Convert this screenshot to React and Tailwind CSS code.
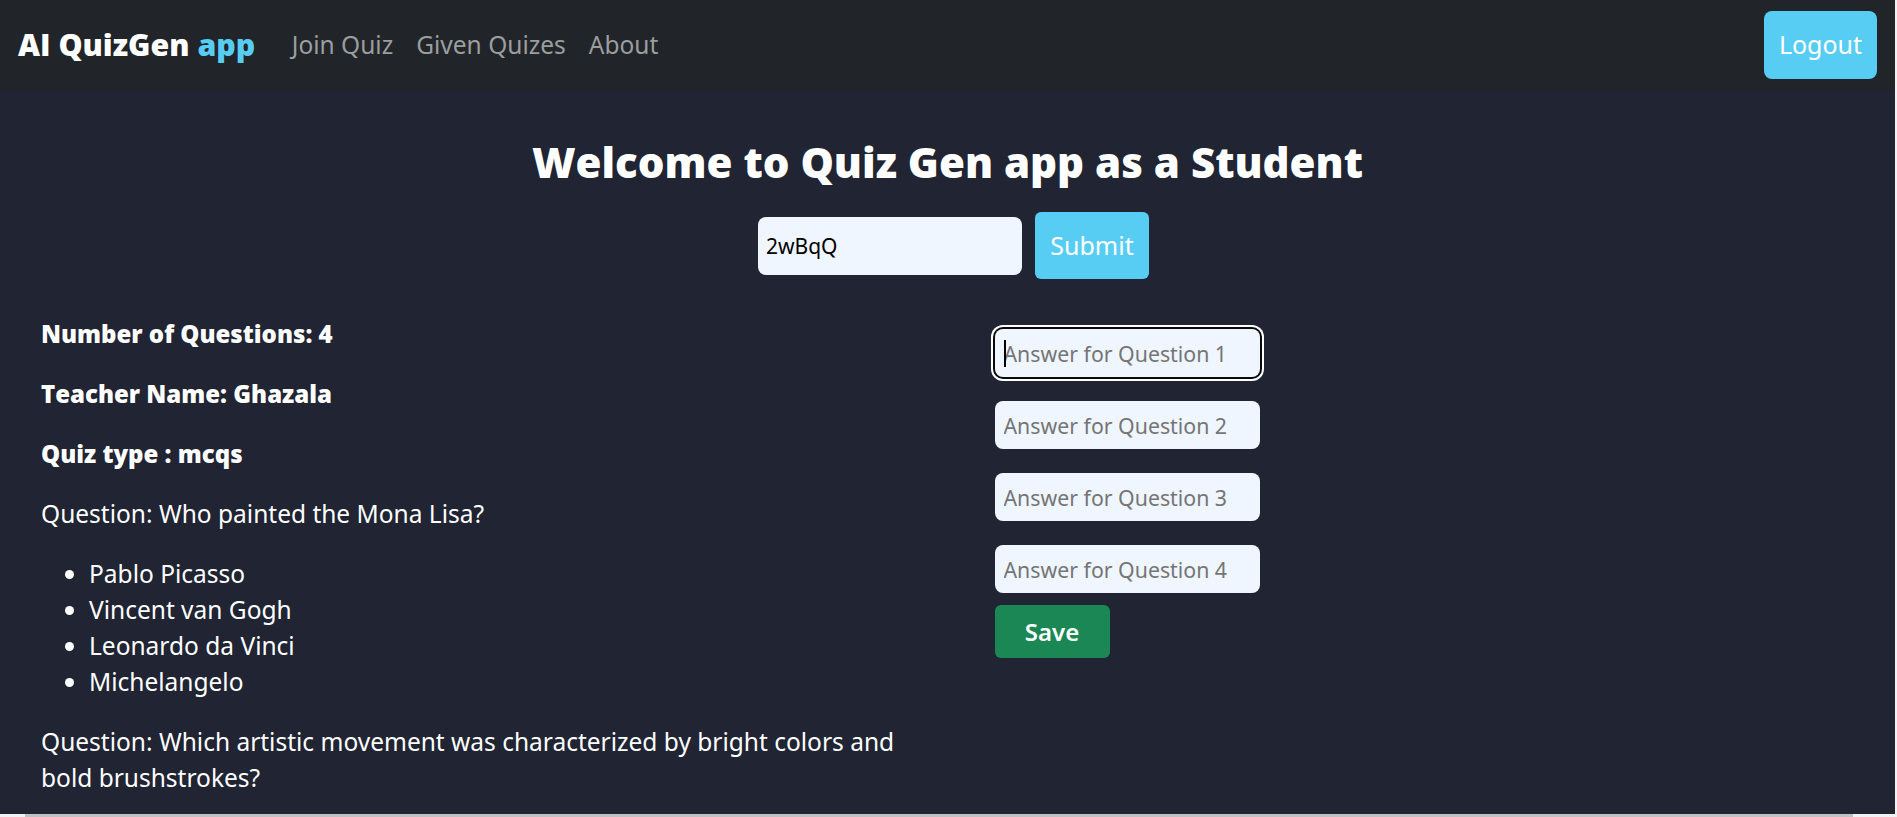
import { useState } from 'react'

const font = { fontFamily: '"Noto Sans", "Open Sans", sans-serif' }
const heavy = { fontFamily: '"Open Sans", "Noto Sans", sans-serif' }

const options = ['Pablo Picasso', 'Vincent van Gogh', 'Leonardo da Vinci', 'Michelangelo']

export default function App() {
  const [code, setCode] = useState('2wBqQ')
  const [answers, setAnswers] = useState(['', '', '', ''])

  return (
    <div className="flex h-screen w-screen flex-col overflow-hidden bg-[#f1f1f1]" style={font}>
      <div className="flex min-h-0 flex-1">
        <div className="flex min-w-0 flex-1 flex-col overflow-hidden bg-[#202433]">
          {/* Navbar */}
          <nav className="flex h-[90px] shrink-0 items-center bg-[#212529] pl-[18px] pr-[18px]">
            <a className="text-[30.3px] font-extrabold leading-none text-white" style={heavy}>
              AI QuizGen <span className="text-[#58cdf3]">app</span>
            </a>
            <ul className="ml-[25px] flex items-center">
              <li className="px-[11.5px] text-[24.5px] text-[#9b9d9f]">Join Quiz</li>
              <li className="px-[11.5px] text-[24.5px] text-[#9b9d9f]">Given Quizes</li>
              <li className="px-[11.5px] text-[24.5px] text-[#9b9d9f]">About</li>
            </ul>
            <button className="ml-auto h-[68px] w-[113px] rounded-[8px] bg-[#58cdf3] text-[25px] text-white">
              Logout
            </button>
          </nav>

          {/* Join */}
          <h1 className="mt-[48px] text-center text-[42px] font-extrabold leading-[48px] text-white" style={heavy}>
            Welcome to Quiz Gen app as a Student
          </h1>
          <form
            className="mt-[26px] flex items-center justify-center gap-[13px] pl-[12px]"
            onSubmit={(e) => e.preventDefault()}
          >
            <input
              value={code}
              onChange={(e) => setCode(e.target.value)}
              className="h-[58px] w-[264px] rounded-[8px] bg-[#eff6ff] pl-[8px] text-[21px] text-black outline-none"
            />
            <button className="h-[67px] w-[114px] rounded-[6px] bg-[#58cdf3] text-[25px] text-white">
              Submit
            </button>
          </form>

          {/* Quiz */}
          <div className="mt-[37px] grid grid-cols-2">
            <div className="pl-[41px] pr-[41px] text-[24.5px] leading-[36px] text-white">
              <p className="mb-[24px] text-[24px] font-extrabold" style={heavy}>Number of Questions: 4</p>
              <p className="mb-[24px] text-[24px] font-extrabold" style={heavy}>Teacher Name: Ghazala</p>
              <p className="mb-[24px] text-[24px] font-extrabold" style={heavy}>Quiz type : mcqs</p>
              <p className="mb-[24px]">Question: Who painted the Mona Lisa?</p>
              <ul className="mb-[24px] list-disc pl-[48px]">
                {options.map((o) => (
                  <li key={o}>{o}</li>
                ))}
              </ul>
              <p className="mb-[24px]">
                Question: Which artistic movement was characterized by bright colors and bold brushstrokes?
              </p>
            </div>
            <div className="flex flex-col items-start gap-[24px] pl-[47px] pt-[13px]">
              {answers.map((a, i) => (
                <div key={i} className="relative">
                  <input
                    value={a}
                    onChange={(e) => {
                      const next = [...answers]
                      next[i] = e.target.value
                      setAnswers(next)
                    }}
                    placeholder={`Answer for Question ${i + 1}`}
                    className={`h-[48px] w-[265px] rounded-[8px] bg-[#eff6ff] pl-[9px] text-[21.3px] text-black outline-none placeholder:text-[#757575] ${
                      i === 0 ? 'shadow-[0_0_0_2px_#0a0a0a,0_0_0_4px_#ffffff]' : ''
                    }`}
                  />
                  {i === 0 && (
                    <span className="absolute left-[9px] top-[11px] h-[27px] w-[2px] bg-black" />
                  )}
                </div>
              ))}
              <button className="-mt-[12px] h-[53px] w-[115px] rounded-[6px] bg-[#1a8754] text-[24px] font-semibold text-white">
                Save
              </button>
            </div>
          </div>
        </div>
        <div className="w-[2px] shrink-0 bg-[#f1f1f1]" />
      </div>
      <div className="flex h-[3px] shrink-0 bg-[#f1f1f1] pl-[25px] pr-[44px]">
        <div className="h-[3px] flex-1 bg-[#c1c1c1]" />
      </div>
    </div>
  )
}
